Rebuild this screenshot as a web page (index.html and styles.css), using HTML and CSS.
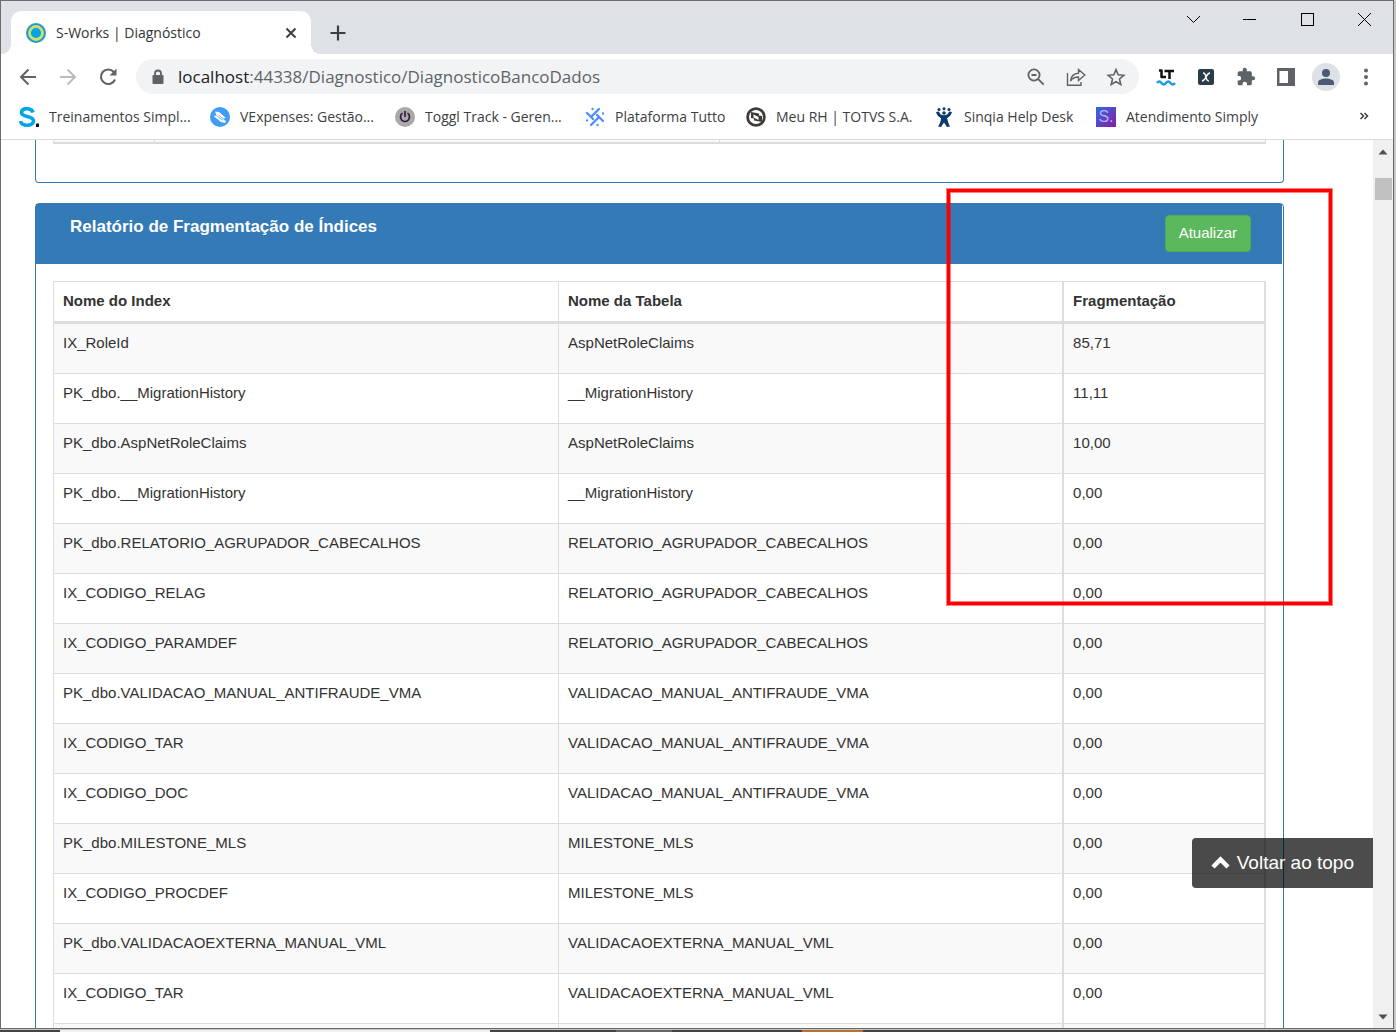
FILE: index.html
```
<!DOCTYPE html>
<html lang="pt-BR">

<head>
    <meta charset="UTF-8">
    <meta name="viewport" content="width=device-width, initial-scale=1.0">
    <title>S-Works | Diagnóstico</title>
    <link rel="stylesheet" href="styles.css">
</head>

<body>
    <div class="janela">
        <header class="abas">
            <div class="aba">
                <svg class="aba-icone" width="20" height="20" viewBox="0 0 20 20">
                    <circle cx="10" cy="10" r="10" fill="#1f9bd0" />
                    <circle cx="10" cy="10" r="6.500" fill="#00a6e8" stroke="#d3dc6a" stroke-width="2.800" />
                </svg>
                <span class="aba-titulo">S-Works | Diagnóstico</span>
                <button class="icone" aria-label="Fechar aba">
                    <svg width="20" height="20" viewBox="0 0 20 20" stroke="#3c4043" stroke-width="2">
                        <path d="M5.500 5.500l9 9M14.500 5.500l-9 9" />
                    </svg>
                </button>
            </div>
            <button class="icone nova-aba" aria-label="Nova aba">
                <svg width="20" height="20" viewBox="0 0 20 20" stroke="#3c4043" stroke-width="2.200">
                    <path d="M10 2.500v15M2.500 10h15" />
                </svg>
            </button>
            <div class="controles">
                <button class="icone" aria-label="Pesquisar abas">
                    <svg width="20" height="20" viewBox="0 0 20 20" fill="none" stroke="#000">
                        <path d="M4 7l6.500 6.500L17 7" />
                    </svg>
                </button>
                <button class="icone" aria-label="Minimizar">
                    <svg width="20" height="20" viewBox="0 0 20 20" stroke="#000">
                        <path d="M3 10.500h13" />
                    </svg>
                </button>
                <button class="icone" aria-label="Maximizar">
                    <svg width="20" height="20" viewBox="0 0 20 20" fill="none" stroke="#000">
                        <rect x="4.500" y="4.500" width="12" height="12" />
                    </svg>
                </button>
                <button class="icone" aria-label="Fechar">
                    <svg width="20" height="20" viewBox="0 0 20 20" stroke="#000">
                        <path d="M4 4l13 13M17 4L4 17" />
                    </svg>
                </button>
            </div>
        </header>

        <div class="barra">
            <button class="icone" aria-label="Voltar">
                <svg width="20" height="20" viewBox="0 0 20 20" fill="none" stroke="#5f6368" stroke-width="2">
                    <path d="M18 10H3M10.500 2.500L3 10l7.500 7.500" />
                </svg>
            </button>
            <button class="icone" aria-label="Avançar">
                <svg width="20" height="20" viewBox="0 0 20 20" fill="none" stroke="#babcbe" stroke-width="2">
                    <path d="M2 10h15M9.500 2.500L17 10l-7.500 7.500" />
                </svg>
            </button>
            <button class="icone" aria-label="Recarregar">
                <svg width="20" height="20" viewBox="0 0 20 20" fill="none" stroke="#5f6368" stroke-width="2.100">
                    <path d="M15.800 5A7.300 7.300 0 1 0 17 12.500" />
                    <path d="M18.500 1.500v7h-7z" fill="#5f6368" stroke="none" />
                </svg>
            </button>
            <div class="endereco">
                <svg width="14" height="16" viewBox="0 0 14 16">
                    <rect x="1.500" y="6" width="11" height="9" rx="1" fill="#5f6368" />
                    <path d="M4 6V4.500a3 3 0 0 1 6 0V6" fill="none" stroke="#5f6368" stroke-width="1.800" />
                </svg>
                <span class="url">localhost<span class="caminho">:44338/Diagnostico/DiagnosticoBancoDados</span></span>
                <button class="icone" aria-label="Zoom">
                    <svg width="20" height="20" viewBox="0 0 20 20" fill="none" stroke="#5f6368" stroke-width="1.800">
                        <circle cx="8" cy="8" r="5.600" />
                        <path d="M12.200 12.200l5.500 5.500M5.500 8h5" />
                    </svg>
                </button>
                <button class="icone" aria-label="Compartilhar">
                    <svg width="20" height="20" viewBox="0 0 20 20" fill="none" stroke="#5f6368" stroke-width="1.400">
                        <path d="M1.500 6v12.300h13.500V15" />
                        <path d="M4.500 14c.5-5 3-7.600 8-7.800V2.500l6.300 5.500-6.300 5.500V10c-4 0-6.200 1.200-8 4z" />
                    </svg>
                </button>
                <button class="icone" aria-label="Favoritar">
                    <svg width="20" height="20" viewBox="0 0 20 20" fill="none" stroke="#5f6368" stroke-width="1.600">
                        <path d="M10 2.600l2.200 5.200 5.600.5-4.300 3.700 1.300 5.500-4.800-2.900-4.800 2.900 1.300-5.500-4.300-3.700 5.600-.5z" />
                    </svg>
                </button>
            </div>
            <div class="extensoes">
                <button class="icone" aria-label="LanguageTool">
                    <svg width="20" height="20" viewBox="0 0 20 20" fill="none" stroke="#111" stroke-width="2.500">
                        <path d="M3 3.500h2.500V10H10M8.500 4H18M13.500 4v8" stroke-linejoin="round" />
                        <path d="M1 16c1.500-2 3-2 4.500 0s3 2 4.500 0 3-2 4.500 0 3 2 4.500 0" stroke="#1b9de0" stroke-width="2.600" />
                    </svg>
                </button>
                <button class="icone" aria-label="Extensão X">
                    <svg width="20" height="20" viewBox="0 0 20 20">
                        <rect x="2" y="2" width="16" height="16" rx="2" fill="#2a3d49" />
                        <path d="M7 6c2 0 2.500 1 3 4s1 4 3 4M14 6c-2 0-3 2-4 4s-2 4-4 4" fill="none" stroke="#fff" stroke-width="1.500" />
                    </svg>
                </button>
                <button class="icone" aria-label="Extensões">
                    <svg width="20" height="20" viewBox="0 0 24 24" fill="#5f6368">
                        <path d="M20.500 11H19V7a2 2 0 0 0-2-2h-4V3.500a2.500 2.500 0 0 0-5 0V5H4a2 2 0 0 0-2 2v3.800h1.500a2.700 2.700 0 0 1 0 5.400H2V20a2 2 0 0 0 2 2h3.800v-1.500a2.700 2.700 0 0 1 5.400 0V22H17a2 2 0 0 0 2-2v-4h1.500a2.500 2.500 0 0 0 0-5z" />
                    </svg>
                </button>
                <button class="icone" aria-label="Painel lateral">
                    <svg width="20" height="20" viewBox="0 0 20 20">
                        <path d="M1 1h18v18H1zM3.500 4v12H12V4z" fill="#5f6368" fill-rule="evenodd" />
                    </svg>
                </button>
                <button class="icone perfil" aria-label="Perfil">
                    <svg width="20" height="20" viewBox="0 0 20 20" fill="#4d5a73">
                        <circle cx="10" cy="6" r="4" />
                        <path d="M2 18v-2.500C2 12.500 7 11.500 10 11.500s8 1 8 4V18z" />
                    </svg>
                </button>
                <button class="icone" aria-label="Menu">
                    <svg width="20" height="20" viewBox="0 0 20 20" fill="#5f6368">
                        <circle cx="10" cy="3.500" r="2" />
                        <circle cx="10" cy="10" r="2" />
                        <circle cx="10" cy="16.500" r="2" />
                    </svg>
                </button>
            </div>
        </div>

        <nav class="favoritos">
            <a href="#">
                <svg width="20" height="20" viewBox="0 0 20 20">
                    <path d="M14 5.500C13 1 3 0 2.500 5.500c0 5.500 12 2.500 12 8.500-.5 6-12.500 5.500-13 0" fill="none" stroke="#00a6e8" stroke-width="3.600" />
                    <rect x="17" y="16.500" width="3" height="3.500" fill="#111" />
                </svg>
                Treinamentos Simpl...
            </a>
            <a href="#">
                <svg width="20" height="20" viewBox="0 0 20 20">
                    <circle cx="10" cy="10" r="10" fill="#3d9df5" />
                    <path d="M5 4.500l4 .5 7 6-3 .5 3 3-1 1.500-4-1L3.500 9l3-.5z" fill="#fff" />
                    <path d="M6.500 8.500l6.500 5M8.500 8l5 4" stroke="#3d9df5" stroke-width=".700" />
                </svg>
                VExpenses: Gestão...
            </a>
            <a href="#">
                <svg width="20" height="20" viewBox="0 0 20 20">
                    <circle cx="10" cy="10" r="10" fill="#aaa8a9" />
                    <path d="M7.500 6.200a4.500 4.500 0 1 0 5 0M10 4v6" fill="none" stroke="#2c1338" stroke-width="1.600" />
                </svg>
                Toggl Track - Geren...
            </a>
            <a href="#">
                <svg width="20" height="20" viewBox="0 0 20 20" fill="none" stroke="#4c8dff" stroke-width="2.300" stroke-linecap="round">
                    <path d="M6.500 9.500L14 2M12 8l6 6M13.500 10.500L6 18M8 12L2 6" />
                    <path d="M7.500 2h.1M18 6.500h.1M12.500 18h.1M2 13.500h.1" />
                </svg>
                Plataforma Tutto
            </a>
            <a href="#">
                <svg width="20" height="20" viewBox="0 0 20 20">
                    <circle cx="10" cy="10" r="8.400" fill="#fff" stroke="#403b38" stroke-width="2.800" />
                    <path d="M5 5l8 1.500v2l3 .5v6l-8-1.500v-2l-3-.5z" fill="#403b38" />
                    <path d="M7.500 7.500l5 2.500v3l-5-2.500z" fill="#fff" />
                </svg>
                Meu RH | TOTVS S.A.
            </a>
            <a href="#">
                <svg width="20" height="20" viewBox="0 0 20 20" fill="#0b3a6f">
                    <circle cx="5" cy="2.500" r="1.500" />
                    <circle cx="10" cy="1.700" r="1.500" />
                    <circle cx="15" cy="2.500" r="1.500" />
                    <path d="M2 5l3-.5c.5 2 2 3.800 5 3.800s4.500-1.800 5-3.800l3 .5c-.8 3-2.500 4.700-5 6.200 1 3 1.500 5.300 3 8.300l-3 .5-3-4.500L7 20l-3-.5c1.500-2.500 3-5 3-8.300C4.500 9.700 2.800 8 2 5z" />
                    <circle cx="10" cy="6" r="1.800" />
                </svg>
                Sinqia Help Desk
            </a>
            <a href="#">
                <span class="simply">S.</span>
                Atendimento Simply
            </a>
            <button class="icone mais" aria-label="Mais favoritos">
                <svg width="20" height="20" viewBox="0 0 20 20" fill="none" stroke="#3c4043" stroke-width="1.500">
                    <path d="M6.500 6l3 3-3 3M10.500 6l3 3-3 3" />
                </svg>
            </button>
        </nav>

        <div class="visor">
            <main class="pagina">
                <section class="painel painel-anterior">
                    <div class="tabela-anterior"><span></span><span></span><span></span></div>
                </section>

                <section class="painel">
                    <div class="painel-titulo">
                        <h2>Relatório de Fragmentação de Índices</h2>
                        <button class="btn-atualizar">Atualizar</button>
                    </div>
                    <div class="painel-corpo">
                        <table class="tabela">
                            <thead>
                                <tr>
                                    <th>Nome do Index</th>
                                    <th>Nome da Tabela</th>
                                    <th>Fragmentação</th>
                                </tr>
                            </thead>
                            <tbody>
                                <tr><td>IX_RoleId</td><td>AspNetRoleClaims</td><td>85,71</td></tr>
                                <tr><td>PK_dbo.__MigrationHistory</td><td>__MigrationHistory</td><td>11,11</td></tr>
                                <tr><td>PK_dbo.AspNetRoleClaims</td><td>AspNetRoleClaims</td><td>10,00</td></tr>
                                <tr><td>PK_dbo.__MigrationHistory</td><td>__MigrationHistory</td><td>0,00</td></tr>
                                <tr><td>PK_dbo.RELATORIO_AGRUPADOR_CABECALHOS</td><td>RELATORIO_AGRUPADOR_CABECALHOS</td><td>0,00</td></tr>
                                <tr><td>IX_CODIGO_RELAG</td><td>RELATORIO_AGRUPADOR_CABECALHOS</td><td>0,00</td></tr>
                                <tr><td>IX_CODIGO_PARAMDEF</td><td>RELATORIO_AGRUPADOR_CABECALHOS</td><td>0,00</td></tr>
                                <tr><td>PK_dbo.VALIDACAO_MANUAL_ANTIFRAUDE_VMA</td><td>VALIDACAO_MANUAL_ANTIFRAUDE_VMA</td><td>0,00</td></tr>
                                <tr><td>IX_CODIGO_TAR</td><td>VALIDACAO_MANUAL_ANTIFRAUDE_VMA</td><td>0,00</td></tr>
                                <tr><td>IX_CODIGO_DOC</td><td>VALIDACAO_MANUAL_ANTIFRAUDE_VMA</td><td>0,00</td></tr>
                                <tr><td>PK_dbo.MILESTONE_MLS</td><td>MILESTONE_MLS</td><td>0,00</td></tr>
                                <tr><td>IX_CODIGO_PROCDEF</td><td>MILESTONE_MLS</td><td>0,00</td></tr>
                                <tr><td>PK_dbo.VALIDACAOEXTERNA_MANUAL_VML</td><td>VALIDACAOEXTERNA_MANUAL_VML</td><td>0,00</td></tr>
                                <tr><td>IX_CODIGO_TAR</td><td>VALIDACAOEXTERNA_MANUAL_VML</td><td>0,00</td></tr>
                                <tr><td></td><td></td><td></td></tr>
                            </tbody>
                        </table>
                    </div>
                </section>
            </main>
            <div class="rolagem">
                <svg width="20" height="24" viewBox="0 0 20 24"><path d="M5.500 14.500h9L10 9.500z" fill="#505050" /></svg>
                <div class="polegar"></div>
                <svg width="20" height="24" viewBox="0 0 20 24"><path d="M5.500 10.500h9L10 15.500z" fill="#505050" /></svg>
            </div>
            <button class="voltar-topo">
                <svg width="19" height="14" viewBox="0 0 19 14">
                    <path d="M2 11l7.500-7.500L17 11" fill="none" stroke="#fff" stroke-width="4.500" />
                </svg>
                Voltar ao topo
            </button>
            <div class="destaque"></div>
        </div>
    </div>
    <div class="tarefas"><span></span><span></span><span></span></div>
</body>

</html>
```
FILE: styles.css
```
* {
    box-sizing: border-box;
}

body {
    margin: 0;
    height: 100vh;
    display: flex;
    flex-direction: column;
    overflow: hidden;
    background-color: #c8c8c8;
    font-family: "Liberation Sans", Arial, sans-serif;
    font-size: 15px;
    color: #333;
}

button {
    font: inherit;
    cursor: pointer;
}

svg {
    display: block;
    flex: none;
}

.icone {
    display: flex;
    padding: 0;
    border: none;
    background: none;
}

/* janela do navegador */
.janela {
    flex: 1;
    min-height: 0;
    margin-right: 2px;
    display: flex;
    flex-direction: column;
    border: 1px solid #6b6b6b;
    background-color: #fff;
}

.abas {
    display: flex;
    flex: none;
    height: 53px;
    padding: 10px 19px 0 10px;
    background-color: #dee1e6;
    font-family: "Open Sans", sans-serif;
    font-size: 14px;
}

.aba {
    position: relative;
    display: flex;
    align-items: center;
    width: 300px;
    padding: 0 10px 0 15px;
    background-color: #fff;
    border-radius: 10px 10px 0 0;
}

.aba::before,
.aba::after {
    content: "";
    position: absolute;
    bottom: 0;
    width: 10px;
    height: 10px;
}

.aba::before {
    left: -10px;
    background: radial-gradient(circle at 0 0, #dee1e6 10px, #fff 10px);
}

.aba::after {
    right: -10px;
    background: radial-gradient(circle at 100% 0, #dee1e6 10px, #fff 10px);
}

.aba-titulo {
    flex: 1;
    margin-left: 10px;
}

.nova-aba {
    align-self: center;
    margin-left: 17px;
}

.controles {
    display: flex;
    gap: 37px;
    margin: -2px 0 0 auto;
    align-self: flex-start;
}

.barra {
    display: flex;
    flex: none;
    align-items: center;
    gap: 20px;
    height: 45px;
    padding: 0 17px;
}

.endereco {
    flex: 1;
    display: flex;
    align-items: center;
    gap: 20px;
    height: 35px;
    margin-left: -2px;
    padding: 0 13px 0 15px;
    border-radius: 18px;
    background-color: #f1f3f4;
}

.url {
    flex: 1;
    margin-left: -7px;
    font-family: "Open Sans", sans-serif;
    font-size: 17px;
    color: #202124;
}

.caminho {
    color: #5f6368;
}

.extensoes {
    display: flex;
    align-items: center;
    gap: 20px;
    margin-left: -3px;
}

.perfil {
    padding: 4px;
    margin: 0 -4px;
    border-radius: 50%;
    background-color: #dee1e6;
}

.favoritos {
    display: grid;
    flex: none;
    grid-template-columns: 191px 185px 190px 161px 188px 162px 1fr 20px;
    align-items: center;
    height: 41px;
    padding: 0 19px 5px 18px;
    border-bottom: 1px solid #dadce0;
    font-family: "Open Sans", sans-serif;
    font-size: 14px;
}

.favoritos a {
    display: flex;
    align-items: center;
    gap: 10px;
    white-space: nowrap;
    color: #3c4043;
    text-decoration: none;
}

.simply {
    width: 20px;
    height: 20px;
    background: linear-gradient(135deg, #2b6fe0, #8a1ba0);
    color: #b9a8ff;
    font: 16px/20px "Liberation Sans", Arial, sans-serif;
    text-align: center;
}

/* área da página */
.visor {
    position: relative;
    display: flex;
    flex: 1;
    min-height: 0;
    overflow: hidden;
}

.pagina {
    flex: 1;
    padding: 0 89px 0 34px;
}

.painel {
    border: 1px solid #337ab7;
    border-radius: 4px;
}

.painel-anterior {
    height: 43px;
    margin-bottom: 20px;
    padding: 0 17px;
    border-top: none;
    border-radius: 0 0 4px 4px;
}

.tabela-anterior {
    display: grid;
    grid-template-columns: 101px 565px 1fr;
    height: 4px;
    border-left: 1px solid #ddd;
    border-bottom: 2px solid #ddd;
    background-color: #f9f9f9;
}

.tabela-anterior span {
    border-right: 1px solid #ddd;
}

.painel-titulo {
    display: flex;
    justify-content: space-between;
    align-items: flex-start;
    height: 60px;
    margin-right: 1px;
    padding: 11px 31px 0 34px;
    background-color: #337ab7;
    color: #fff;
}

.painel-titulo h2 {
    margin: 2px 0 0;
    font-size: 17px;
    line-height: 20px;
}

.btn-atualizar {
    height: 37px;
    padding: 0 13px 2px;
    border: 1px solid #4cae4c;
    border-radius: 4px;
    background-color: #5cb85c;
    color: #fff;
}

.painel-corpo {
    padding: 17px;
}

.tabela {
    width: 100%;
    table-layout: fixed;
    border-collapse: separate;
    border-spacing: 0;
    border: solid #ddd;
    border-width: 1px 0 0 1px;
}

.tabela th,
.tabela td {
    height: 50px;
    padding: 8px 9px;
    border: solid #ddd;
    border-width: 0 1px 1px 0;
    line-height: 21px;
    text-align: left;
    vertical-align: top;
}

.tabela th {
    width: 41.67%;
    height: 42px;
    border-bottom-width: 3px;
}

.tabela th:last-child {
    width: 16.66%;
}

.tabela th:nth-child(n+2),
.tabela td:nth-child(n+2) {
    border-right-width: 2px;
}

.tabela tbody tr:nth-child(odd) {
    background-color: #f9f9f9;
}

.rolagem {
    flex: none;
    display: flex;
    flex-direction: column;
    width: 20px;
    background-color: #f0f0f0;
}

.polegar {
    height: 22px;
    margin: 14px 1px 0 2px;
    background-color: #c1c1c1;
}

.rolagem svg:last-child {
    margin-top: auto;
}

.voltar-topo {
    position: absolute;
    right: 20px;
    bottom: 140px;
    display: flex;
    align-items: center;
    gap: 7px;
    height: 50px;
    padding: 0 19px;
    border: none;
    border-radius: 4px 0 0 4px;
    background-color: rgba(0, 0, 0, 0.7);
    color: #fff;
    font-size: 19px;
}

/* marcação em vermelho */
.destaque {
    position: absolute;
    top: 49px;
    right: 61px;
    width: 385px;
    height: 416px;
    border: 3px solid #f00;
    box-shadow: 0 0 0 1px rgba(255, 0, 0, 0.5), inset 0 0 0 1px rgba(255, 0, 0, 0.5);
    pointer-events: none;
}

.tarefas {
    display: flex;
    flex: none;
    height: 3px;
    border-top: 1px solid #c4c4c4;
    background-color: #444;
}

.tarefas span:first-child {
    width: 430px;
    margin-left: 60px;
    background-color: #f0f0f0;
}

.tarefas span:nth-child(2) {
    width: 56px;
    margin-left: 126px;
    background-color: #666;
}

.tarefas span:last-child {
    width: 61px;
    margin-left: 130px;
    background-color: #b87333;
}
```
